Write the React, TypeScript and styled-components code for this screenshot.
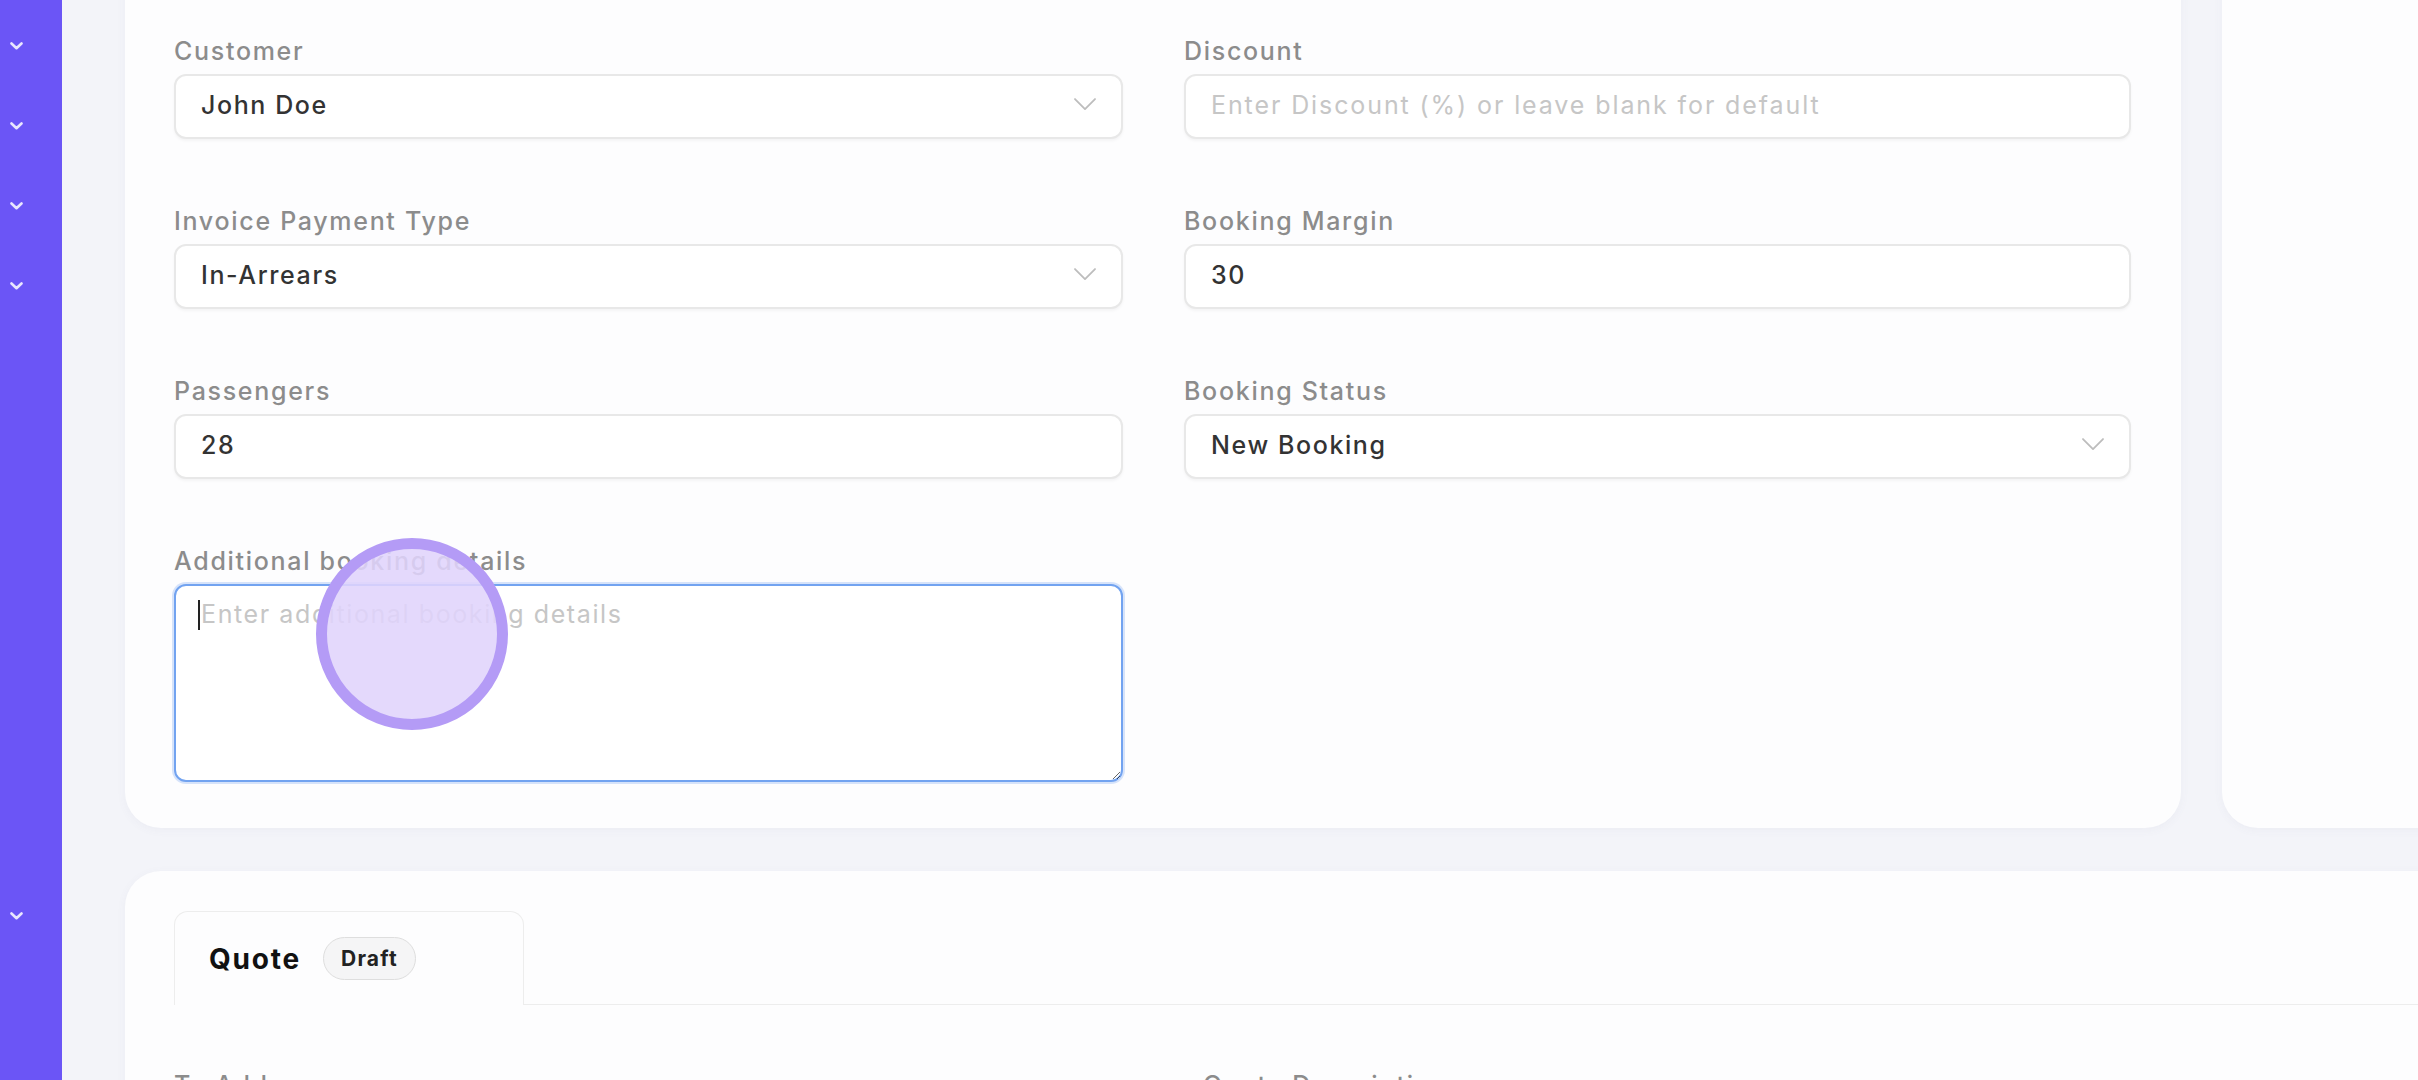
import React from 'react';
import styled, { createGlobalStyle } from 'styled-components';

const GlobalStyle = createGlobalStyle`
  html, body {
    margin: 0;
    padding: 0;
    background: #f3f4f9;
    overflow: hidden;
  }
  * { box-sizing: border-box; }
`;

const Shell = styled.div`
  position: relative;
  display: flex;
  width: 2418px;
  height: 1080px;
  overflow: hidden;
  font-family: Inter, "Liberation Sans", sans-serif;
  background: #f3f4f9;
`;

const Sidebar = styled.nav`
  flex: 0 0 62px;
  display: flex;
  flex-direction: column;
  padding-top: 6px;
  background: #6b55f6;
`;

const NavItem = styled.div<{ $push?: number }>`
  width: 32px;
  height: 80px;
  margin-top: ${p => p.$push || 0}px;
  display: flex;
  align-items: center;
  justify-content: center;
  color: rgba(255, 255, 255, 0.85);
`;

const Main = styled.main`
  flex: 1;
  display: flex;
  flex-direction: column;
  gap: 43px;
  margin-top: -40px;
  padding-left: 63px;
`;

const TopRow = styled.div`
  display: flex;
  gap: 41px;
`;

const Card = styled.section<{ $w?: number }>`
  flex: 0 0 ${p => (p.$w ? `${p.$w}px` : 'auto')};
  background: #fdfdfe;
  border-radius: 36px;
  box-shadow: 0 2px 10px rgba(90, 90, 140, 0.05);
`;

const FormCard = styled(Card)`
  padding: 77px 50px 46px 49px;
`;

const SideCard = styled(Card)`
  flex: 0 0 500px;
`;

const FieldGrid = styled.div`
  display: grid;
  grid-template-columns: 949px 947px;
  column-gap: 61px;
  row-gap: 68px;
`;

const Field = styled.div`
  display: flex;
  flex-direction: column;
  gap: 9px;
`;

const Label = styled.label`
  height: 28px;
  line-height: 28px;
  font-size: 25px;
  font-weight: 500;
  color: #8c8c8c;
  letter-spacing: 1.7px;
  white-space: nowrap;
`;

const BoxBase = styled.div`
  height: 65px;
  border: 2px solid #e8e8e8;
  border-radius: 12px;
  background: #fff;
  box-shadow: 0 2px 3px rgba(0, 0, 0, 0.04);
  padding: 0 25px 4px;
  display: flex;
  align-items: center;
  justify-content: space-between;
  font-size: 25px;
  font-weight: 500;
  color: #333;
  letter-spacing: 1.6px;
`;

const Placeholder = styled.span`
  color: #c6c6c6;
  font-weight: 400;
  letter-spacing: 1.9px;
`;

const TextAreaWrap = styled.div`
  position: relative;
  height: 198px;
`;

const Area = styled.textarea`
  width: 100%;
  height: 100%;
  border: 2.5px solid #72a3f0;
  border-radius: 12px;
  box-shadow: 0 0 0 2px rgba(114, 163, 240, 0.28);
  padding: 13px 25px;
  font-family: Inter, "Liberation Sans", sans-serif;
  font-size: 25px;
  color: #333;
  letter-spacing: 1.6px;
  outline: none;
  resize: vertical;
  background: #fff;
  &::placeholder {
    color: #c6c6c6;
  }
`;

const Caret = styled.span`
  position: absolute;
  left: 24px;
  top: 16px;
  width: 2px;
  height: 30px;
  background: #222;
`;

const QuoteCard = styled(Card)`
  flex: none;
  width: 2400px;
  height: 400px;
  padding: 40px 0 0 49px;
  border-bottom-left-radius: 0;
`;

const TabStrip = styled.div`
  display: flex;
  align-items: flex-end;
`;

const Tab = styled.div`
  width: 350px;
  height: 94px;
  display: flex;
  align-items: center;
  gap: 22px;
  padding-left: 34px;
  border: 1.5px solid #ededed;
  border-bottom: none;
  border-radius: 14px 14px 0 0;
`;

const TabTitle = styled.span`
  font-size: 28px;
  font-weight: 700;
  color: #111;
  letter-spacing: 1.8px;
`;

const Badge = styled.span`
  height: 43px;
  padding: 0 17px;
  display: flex;
  align-items: center;
  border: 1.5px solid #dedede;
  border-radius: 22px;
  background: #f5f5f6;
  font-size: 21px;
  font-weight: 700;
  color: #222;
  letter-spacing: 1.2px;
`;

const TabLine = styled.div`
  flex: 1;
  border-bottom: 1.5px solid #ededed;
`;

const QuoteFields = styled.div`
  display: grid;
  grid-template-columns: 1029px 900px;
  padding-top: 66px;
`;

const Touch = styled.div`
  position: absolute;
  left: 316px;
  top: 538px;
  width: 192px;
  height: 192px;
  border-radius: 50%;
  border: 11px solid #b49bf6;
  background: rgba(224, 212, 252, 0.88);
  pointer-events: none;
`;

const Chevron = ({ size = 22, color = '#bdbdbd', stroke = 1.8 }: { size?: number; color?: string; stroke?: number }) => (
  <svg width={size} height={size * 0.55} viewBox="0 0 22 12" fill="none">
    <path d="M1 1 L11 11 L21 1" stroke={color} strokeWidth={stroke} strokeLinecap="round" strokeLinejoin="round" />
  </svg>
);

const SideChevron = () => (
  <svg width="13" height="8" viewBox="0 0 13 8" fill="none">
    <path d="M1.5 1.5 L6.5 6.2 L11.5 1.5" stroke="currentColor" strokeWidth="2.6" strokeLinecap="round" strokeLinejoin="round" />
  </svg>
);

export default function App() {
  return (
    <>
      <GlobalStyle />
      <Shell>
        <Sidebar>
          <NavItem><SideChevron /></NavItem>
          <NavItem><SideChevron /></NavItem>
          <NavItem><SideChevron /></NavItem>
          <NavItem><SideChevron /></NavItem>
          <NavItem $push={550}><SideChevron /></NavItem>
        </Sidebar>
        <Main>
          <TopRow>
            <FormCard $w={2056}>
              <FieldGrid>
                <Field>
                  <Label>Customer</Label>
                  <BoxBase>John Doe<Chevron /></BoxBase>
                </Field>
                <Field>
                  <Label>Discount</Label>
                  <BoxBase><Placeholder>Enter Discount (%) or leave blank for default</Placeholder></BoxBase>
                </Field>
                <Field>
                  <Label>Invoice Payment Type</Label>
                  <BoxBase>In-Arrears<Chevron /></BoxBase>
                </Field>
                <Field>
                  <Label>Booking Margin</Label>
                  <BoxBase>30</BoxBase>
                </Field>
                <Field>
                  <Label>Passengers</Label>
                  <BoxBase>28</BoxBase>
                </Field>
                <Field>
                  <Label>Booking Status</Label>
                  <BoxBase>New Booking<Chevron /></BoxBase>
                </Field>
                <Field>
                  <Label>Additional booking details</Label>
                  <TextAreaWrap>
                    <Area placeholder="Enter additional booking details" />
                    <Caret />
                  </TextAreaWrap>
                </Field>
              </FieldGrid>
            </FormCard>
            <SideCard />
          </TopRow>
          <QuoteCard>
            <TabStrip>
              <Tab>
                <TabTitle>Quote</TabTitle>
                <Badge>Draft</Badge>
              </Tab>
              <TabLine />
            </TabStrip>
            <QuoteFields>
              <Label>To Address</Label>
              <Label>Quote Description</Label>
            </QuoteFields>
          </QuoteCard>
        </Main>
        <Touch />
      </Shell>
    </>
  );
}
